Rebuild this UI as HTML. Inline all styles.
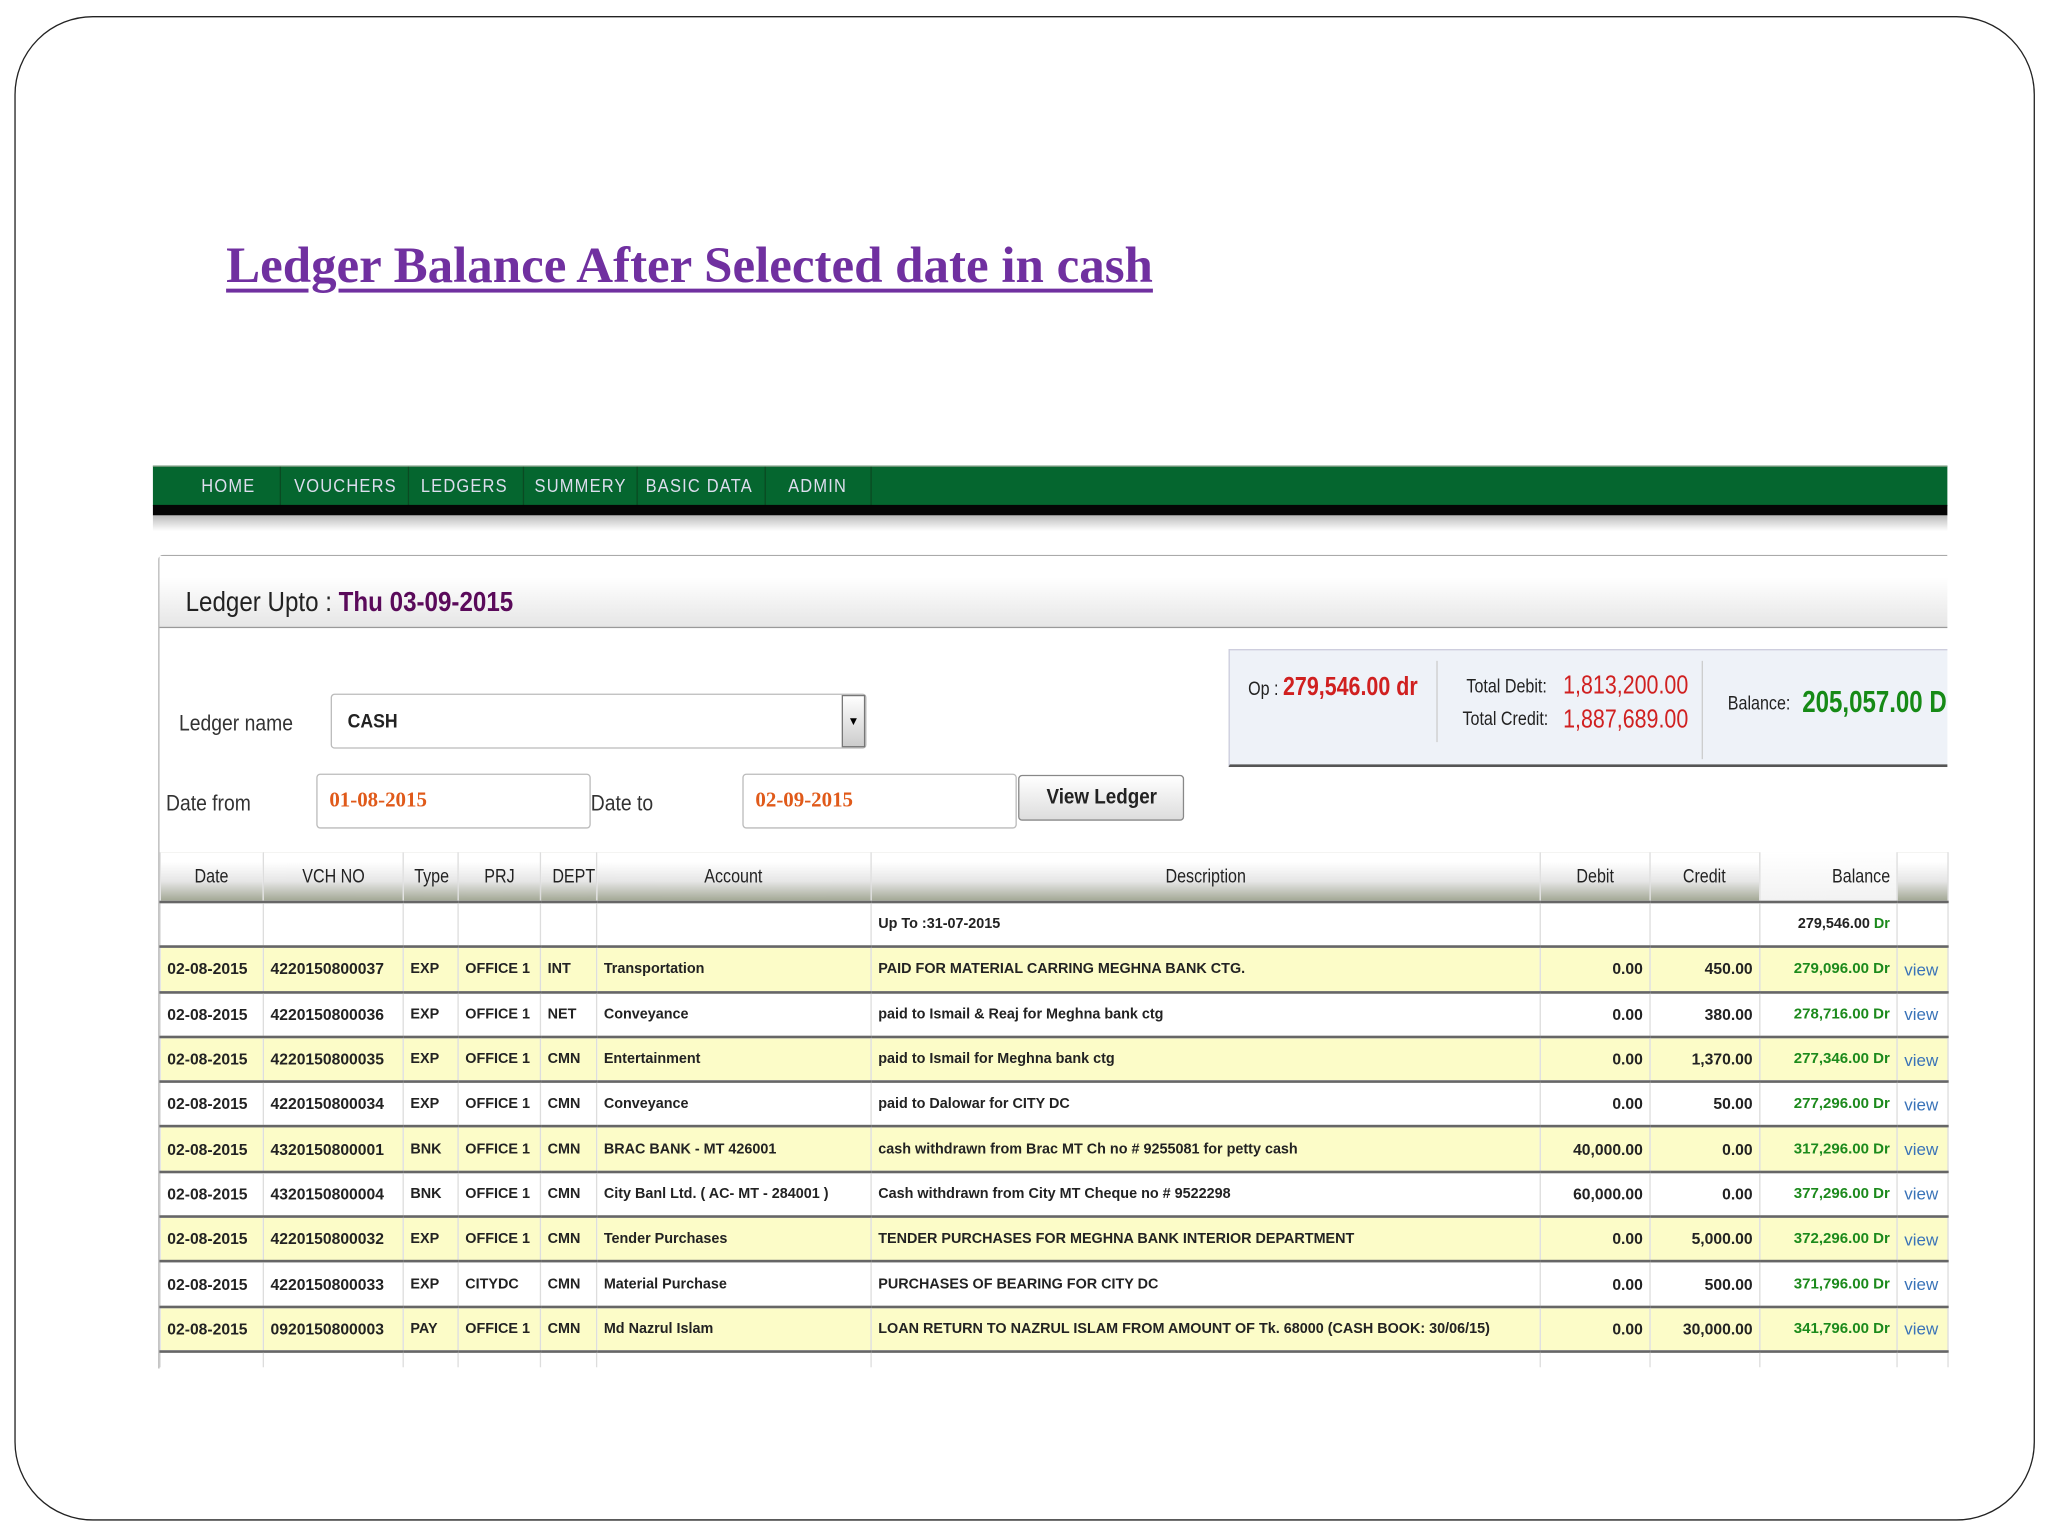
<!DOCTYPE html>
<html><head><meta charset="utf-8"><style>
*{margin:0;padding:0;box-sizing:border-box}
html,body{width:2048px;height:1536px;overflow:hidden;background:#fff}
#w{position:absolute;left:0;top:-1px;width:1567px;height:1172px;transform:scale(1.30696,1.3106);transform-origin:0 0;font-family:"Liberation Sans",sans-serif}
.a{position:absolute;white-space:nowrap}
.c{transform-origin:0 0}
.frame{left:11px;top:13px;width:1546px;height:1148px;border:1.5px solid #222;border-radius:60px}
.title{left:173px;top:181px;font-family:"Liberation Serif",serif;font-weight:bold;font-size:39px;color:#7030a0;text-decoration:underline;text-decoration-thickness:3px;text-underline-offset:5px}
.nav{left:117px;top:356px;width:1373px;height:31px;background:#05662f;border-top:1px solid #7a9a80}
.nav span{position:absolute;top:6px;font-size:14px;color:#dde;transform:scaleX(.9);letter-spacing:1px;transform-origin:0 0}
.nav i{position:absolute;top:0;width:1px;height:30px;background:#0a4a22}
.blk{left:117px;top:386px;width:1373px;height:8px;background:#050505}
.shd{left:117px;top:394px;width:1373px;height:12px;background:linear-gradient(#bbb,#fff)}
.panel{left:121px;top:424px;width:1369px;height:621px;border-left:1px solid #aaa;border-top:1px solid #aaa;border-top-left-radius:4px}
.phead{left:122px;top:425px;width:1368px;height:55px;background:linear-gradient(#fff 30%,#e6e6e6);border-bottom:1px solid #999}
.box{border:1px solid #bbb;border-radius:3px;background:#fff}
table{border-collapse:collapse;table-layout:fixed;position:absolute;left:122px;top:651px;width:1368px}
td,th{font-size:12px;font-weight:bold;color:#222;padding:0 5px;border-left:1px solid #ddd;border-right:1px solid #ddd;white-space:nowrap;overflow:hidden}
th{height:38px;font-size:15px;font-weight:normal;color:#222;background:linear-gradient(#fff 20%,#e6e6e6 60%,#a3a895);border-bottom:2px solid #666}
th span{display:inline-block;transform:scaleX(.82)}
tr.r td{height:34.3px;border-bottom:2px solid #666}
tr.y td{background:#fcfcc8}
td.s{font-size:11px}
td.n{text-align:right}
td.g{color:#1c8a1c;text-align:right;font-size:11.5px}
td.v{color:#3a73b8;font-weight:normal;font-size:13px}
</style></head><body><div id="w">
<div class="a frame"></div>
<div class="a title">Ledger Balance After Selected date in cash</div>
<div class="a nav">
<span style="left:37px">HOME</span><i style="left:97px"></i>
<span style="left:108px">VOUCHERS</span><i style="left:195px"></i>
<span style="left:205px">LEDGERS</span><i style="left:283px"></i>
<span style="left:292px">SUMMERY</span><i style="left:370px"></i>
<span style="left:377px">BASIC DATA</span><i style="left:468px"></i>
<span style="left:486px">ADMIN</span><i style="left:549px"></i>
</div>
<div class="a blk"></div><div class="a shd"></div>
<div class="a panel"></div>
<div class="a phead"></div>
<div class="a c" style="left:142px;top:449px;font-size:21px;color:#222;transform:scaleX(.88)">Ledger Upto : <b style="color:#5a0a5a">Thu 03-09-2015</b></div>
<div class="a c" style="left:137px;top:543px;font-size:17px;color:#333;transform:scaleX(.87)">Ledger name</div>
<div class="a box" style="left:253px;top:530px;width:410px;height:42px"></div>
<div class="a c" style="left:266px;top:543px;font-size:15px;font-weight:bold;color:#222;transform:scaleX(.9)">CASH</div>
<div class="a" style="left:644px;top:531px;width:18px;height:40px;background:linear-gradient(#fff,#ccc);border:1px solid #777;font-size:9px;text-align:center;line-height:38px">▼</div>
<div class="a c" style="left:127px;top:604px;font-size:17px;color:#333;transform:scaleX(.87)">Date from</div>
<div class="a box" style="left:242px;top:591px;width:210px;height:42px"></div>
<div class="a" style="left:252px;top:603px;font-family:'Liberation Serif',serif;font-weight:bold;font-size:16px;color:#e05a1a">01-08-2015</div>
<div class="a c" style="left:452px;top:604px;font-size:17px;color:#333;transform:scaleX(.87)">Date to</div>
<div class="a box" style="left:568px;top:591px;width:210px;height:42px"></div>
<div class="a" style="left:578px;top:603px;font-family:'Liberation Serif',serif;font-weight:bold;font-size:16px;color:#e05a1a">02-09-2015</div>
<div class="a" style="left:779px;top:592px;width:127px;height:35px;border:1px solid #888;border-radius:3px;background:linear-gradient(#fff,#ddd);font-size:16px;font-weight:bold;color:#222;text-align:center;line-height:33px"><span style="display:inline-block;transform:scaleX(.9)">View Ledger</span></div>
<div class="a" style="left:940px;top:496px;width:550px;height:90px;background:#eef2f8;border-top:1px solid #ccd;border-left:1px solid #ccd;border-bottom:2px solid #555"></div>
<div class="a" style="left:1099px;top:505px;width:1px;height:62px;background:#ccc"></div>
<div class="a" style="left:1302px;top:505px;width:1px;height:75px;background:#ccc"></div>
<div class="a c" style="left:955px;top:514px;font-size:15px;color:#222;transform:scaleX(.82)">Op : <span style="font-size:20px;color:#d02020;font-weight:bold">279,546.00 dr</span></div>
<div class="a c" style="left:1122px;top:516px;font-size:15px;color:#222;transform:scaleX(.82)">Total Debit:</div>
<div class="a c" style="left:1196px;top:513px;font-size:20px;color:#d02020;transform:scaleX(.82)">1,813,200.00</div>
<div class="a c" style="left:1119px;top:541px;font-size:15px;color:#222;transform:scaleX(.82)">Total Credit:</div>
<div class="a c" style="left:1196px;top:539px;font-size:20px;color:#d02020;transform:scaleX(.82)">1,887,689.00</div>
<div class="a c" style="left:1322px;top:529px;font-size:15px;color:#222;transform:scaleX(.82)">Balance:</div>
<div class="a" style="left:1379px;top:523px;width:111px;overflow:hidden"><div class="c" style="font-size:23px;font-weight:bold;color:#168a16;transform:scaleX(.8)">205,057.00 Dr</div></div>
<table>
<colgroup><col style="width:79px"><col style="width:107px"><col style="width:42px"><col style="width:63px"><col style="width:43px"><col style="width:210px"><col style="width:512px"><col style="width:84px"><col style="width:84px"><col style="width:105px"><col style="width:39px"></colgroup>
<tr><th><span>Date</span></th><th><span>VCH NO</span></th><th><span>Type</span></th><th><span>PRJ</span></th><th><span>DEPT</span></th><th><span>Account</span></th><th><span>Description</span></th><th><span>Debit</span></th><th><span>Credit</span></th><th style="text-align:right;background:linear-gradient(#fff,#f2f2f2)"><span style="transform-origin:100% 0">Balance</span></th><th></th></tr>
<tr class="r"><td style="height:33px"></td><td></td><td></td><td></td><td></td><td></td><td class="s">Up To :31-07-2015</td><td></td><td></td><td class="n s">279,546.00 <span style="color:#1c8a1c">Dr</span></td><td></td></tr>
<tr class="r y"><td>02-08-2015</td><td>4220150800037</td><td class="s">EXP</td><td class="s">OFFICE 1</td><td class="s">INT</td><td class="s">Transportation</td><td class="s">PAID FOR MATERIAL CARRING MEGHNA BANK CTG.</td><td class="n">0.00</td><td class="n">450.00</td><td class="g">279,096.00 Dr</td><td class="v">view</td></tr>
<tr class="r"><td>02-08-2015</td><td>4220150800036</td><td class="s">EXP</td><td class="s">OFFICE 1</td><td class="s">NET</td><td class="s">Conveyance</td><td class="s">paid to Ismail &amp; Reaj for Meghna bank ctg</td><td class="n">0.00</td><td class="n">380.00</td><td class="g">278,716.00 Dr</td><td class="v">view</td></tr>
<tr class="r y"><td>02-08-2015</td><td>4220150800035</td><td class="s">EXP</td><td class="s">OFFICE 1</td><td class="s">CMN</td><td class="s">Entertainment</td><td class="s">paid to Ismail for Meghna bank ctg</td><td class="n">0.00</td><td class="n">1,370.00</td><td class="g">277,346.00 Dr</td><td class="v">view</td></tr>
<tr class="r"><td>02-08-2015</td><td>4220150800034</td><td class="s">EXP</td><td class="s">OFFICE 1</td><td class="s">CMN</td><td class="s">Conveyance</td><td class="s">paid to Dalowar for CITY DC</td><td class="n">0.00</td><td class="n">50.00</td><td class="g">277,296.00 Dr</td><td class="v">view</td></tr>
<tr class="r y"><td>02-08-2015</td><td>4320150800001</td><td class="s">BNK</td><td class="s">OFFICE 1</td><td class="s">CMN</td><td class="s">BRAC BANK - MT 426001</td><td class="s">cash withdrawn from Brac MT Ch no # 9255081 for petty cash</td><td class="n">40,000.00</td><td class="n">0.00</td><td class="g">317,296.00 Dr</td><td class="v">view</td></tr>
<tr class="r"><td>02-08-2015</td><td>4320150800004</td><td class="s">BNK</td><td class="s">OFFICE 1</td><td class="s">CMN</td><td class="s">City Banl Ltd. ( AC- MT - 284001 )</td><td class="s">Cash withdrawn from City MT Cheque no # 9522298</td><td class="n">60,000.00</td><td class="n">0.00</td><td class="g">377,296.00 Dr</td><td class="v">view</td></tr>
<tr class="r y"><td>02-08-2015</td><td>4220150800032</td><td class="s">EXP</td><td class="s">OFFICE 1</td><td class="s">CMN</td><td class="s">Tender Purchases</td><td class="s">TENDER PURCHASES FOR MEGHNA BANK INTERIOR DEPARTMENT</td><td class="n">0.00</td><td class="n">5,000.00</td><td class="g">372,296.00 Dr</td><td class="v">view</td></tr>
<tr class="r"><td>02-08-2015</td><td>4220150800033</td><td class="s">EXP</td><td class="s">CITYDC</td><td class="s">CMN</td><td class="s">Material Purchase</td><td class="s">PURCHASES OF BEARING FOR CITY DC</td><td class="n">0.00</td><td class="n">500.00</td><td class="g">371,796.00 Dr</td><td class="v">view</td></tr>
<tr class="r y"><td>02-08-2015</td><td>0920150800003</td><td class="s">PAY</td><td class="s">OFFICE 1</td><td class="s">CMN</td><td class="s">Md Nazrul Islam</td><td class="s">LOAN RETURN TO NAZRUL ISLAM FROM AMOUNT OF Tk. 68000 (CASH BOOK: 30/06/15)</td><td class="n">0.00</td><td class="n">30,000.00</td><td class="g">341,796.00 Dr</td><td class="v">view</td></tr>
<tr><td style="height:12px"></td><td></td><td></td><td></td><td></td><td></td><td></td><td></td><td></td><td></td><td></td></tr>
</table>
</div></body></html>
